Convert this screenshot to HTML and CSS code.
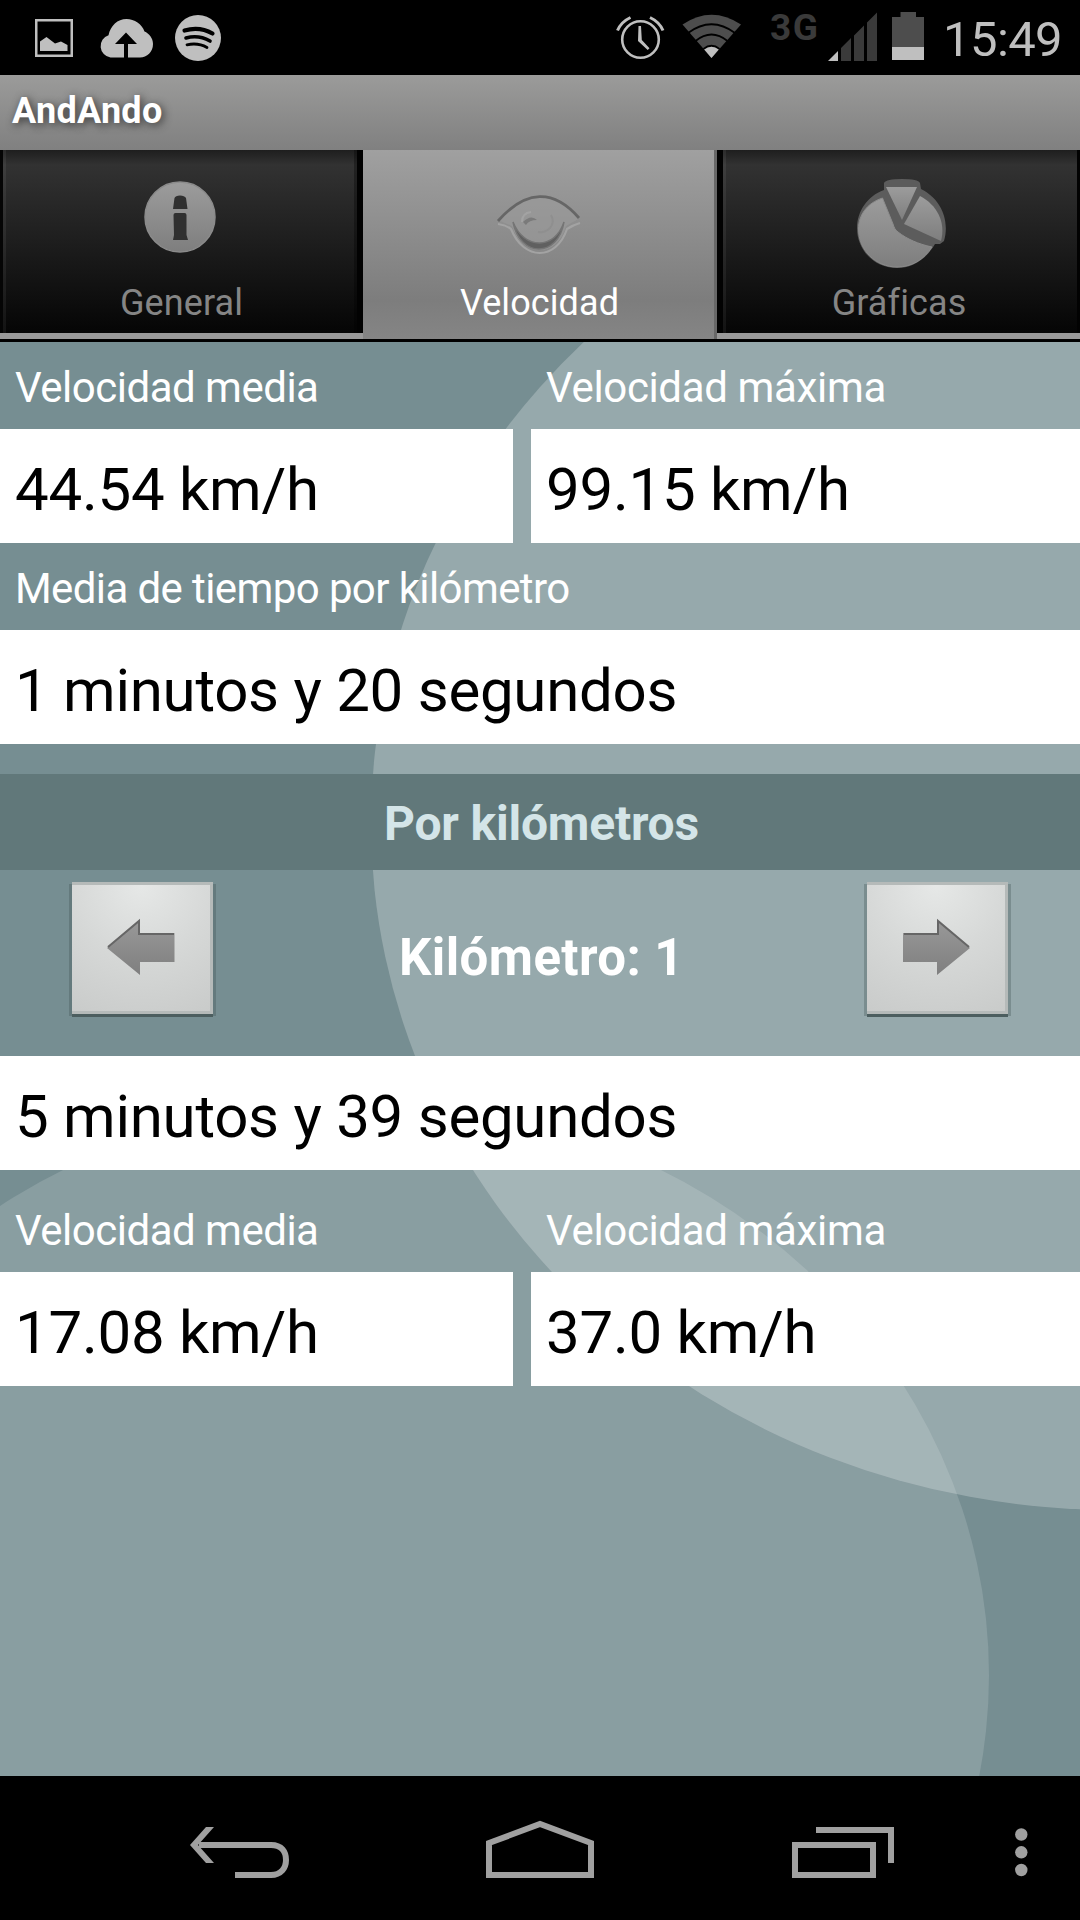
FILE: index.html
```html
<!DOCTYPE html>
<html lang="es">
<head>
<meta charset="utf-8">
<title>AndAndo</title>
<link rel="stylesheet" href="styles.css">
</head>
<body>
<div class="screen">
  <header class="status">
    <svg class="status-left" width="360" height="75" viewBox="0 0 360 75">
      <g fill="#bfbfbf">
        <path fill-rule="evenodd" d="M35 19h38v38H35zM37.500 21.500v33h33v-33z"/>
        <path d="M40 41.500l6.500-4.500 8.500 6.500 6-2 6.500 3.500V51H40z"/>
        <path fill-rule="evenodd" d="M110.500 57.500a11.500 11.500 0 0 1-2-22.300c2-9.500 9-16.200 18-16.200 8 0 15.500 5 18 12.500 4.500 2 8.500 6.500 8.500 12.500 0 8-6 13.500-13 13.500h-12V44h9l-11-11.500L115 44h9v13.500z"/>
        <circle cx="198" cy="38" r="23"/>
      </g>
      <g fill="none" stroke="#000" stroke-linecap="round">
        <path stroke-width="4.200" d="M184.500 30.500q15-4.500 28 3"/>
        <path stroke-width="3.600" d="M186 38q12.500-3.500 24 3"/>
        <path stroke-width="2.800" d="M187 44.800q11-2.500 20 2.700"/>
      </g>
    </svg>
    <div class="status-right">
      <svg width="46" height="75" viewBox="616 0 46 75" fill="none" stroke="#bfbfbf">
        <circle cx="640.500" cy="39.500" r="18.300" stroke-width="2.600"/>
        <path stroke-width="3" d="M617.500 30.500q3.500-8.500 13-13M663 30.500q-3.500-8.500-13-13"/>
        <path fill="#bfbfbf" stroke="none" d="M638.500 26h2.500l.8 14 7.700 8.300-1.800 1.800-9.700-9z"/>
      </svg>
      <svg width="60" height="75" viewBox="682 0 60 75">
        <path fill="#4d4d4d" d="M711.500 58L682.500 24.500Q711.500 5 741 24.500z"/>
        <g fill="none" stroke="#000" stroke-width="1.800">
          <path d="M688 33q23.500-17.500 47 0M695.500 41q16-13 32 0M703.500 49q8-6.500 16 0"/>
        </g>
        <path fill="#bfbfbf" d="M711.500 58l-7.300-8.500q7.300-5.500 14.500 0z"/>
      </svg>
      <span class="network">3G</span>
      <svg width="50" height="75" viewBox="828 0 50 75" fill="#3a3a3a">
        <path fill="#bfbfbf" d="M828 61l10-10v10z"/>
        <path d="M841 61V48l10-10v23zM854 61V35.500l10-10V61zM867 61V22.500l10-10V61z"/>
      </svg>
      <svg class="battery" width="32" height="75" viewBox="892 0 32 75">
        <path fill="#4d4d4d" d="M892 17h8.500v-5H916v5h8v30h-32z"/>
        <path fill="#bfbfbf" d="M892 47h32v13h-32z"/>
      </svg>
      <time class="clock">15:49</time>
    </div>
  </header>

  <div class="titlebar"><h1 class="title">AndAndo</h1></div>

  <nav class="tabs">
    <div class="tab tab-general">
      <svg width="84" height="92" viewBox="0 0 84 92">
        <defs>
          <linearGradient id="gray" x1="0" y1="0" x2="0" y2="1"><stop offset="0" stop-color="#9c9c9c"/><stop offset="1" stop-color="#7e7e7e"/></linearGradient>
        </defs>
        <circle cx="42" cy="45" r="35" fill="url(#gray)" stroke="#8b8b8b" stroke-width="1.500"/>
        <path fill="#303030" d="M36.500 26q1-2.500 5.500-2.500t6 2.500l1.500 11H35zM35.500 43q0-2 2-2h9q2 0 2 2v20l1.500 5H35l1-5z"/>
      </svg>
      <span>General</span>
    </div>
    <div class="tab tab-active">
      <svg width="92" height="92" viewBox="-2 0 92 92" fill="none">
        <path d="M2 48C30 17 58 17 84 46L70 54C62 86 26 86 16 54z" fill="#9b9b9b" opacity=".6"/>
        <path d="M2 52q8 1 13 5C28 89 60 89 71 57q6-4 13-6" stroke="#a3a3a3" stroke-width="2.200"/>
        <path d="M2 49C30 17 58 17 83 46" stroke="#666" stroke-width="2.800"/>
        <path d="M17 50C24 86 62 86 68 50 59 78 28 78 17 50z" fill="#606060" stroke="#757575" stroke-width="1.500"/>
        <path d="M26 50q0-9 9-10" stroke="#a3a3a3" stroke-width="2"/>
        <path d="M27 50q8-8 14-2-8 0-11 5z" fill="#7a7a7a"/>
        <path d="M55 43q4 7-1 13-5 5-12 4" stroke="#8f8f8f" stroke-width="2"/>
      </svg>
      <span>Velocidad</span>
    </div>
    <div class="tab tab-graficas">
      <svg class="pie" width="90" height="92" viewBox="0 0 90 92">
        <g transform="translate(-855 -172)">
          <path d="M884 183q2-4 18-4t18 4l1 6c20 10 29 31 23 52l-4 3h-5c-10 17-24 24-38 24-23 0-40-18-40-40 0-16 10-32 27-38z" fill="#5c5c5c"/>
          <path d="M882.500 198C867 203 858.500 215 858.500 229c0 21 17 38 38.500 38 14 0 27-7 35-20-14-3-25-8-34-15-3-2-4-5-5-8z" fill="url(#gray)" stroke="#8c8c8c" stroke-width="1"/>
          <path d="M886 187h31l-15 33z" fill="url(#gray)"/>
          <path d="M920 196c17 9 26 26 21 45l-37-17z" fill="url(#gray)"/>
        </g>
      </svg>
      <span>Gráficas</span>
    </div>
  </nav>

  <main class="content">
    <svg class="backdrop" width="1080" height="1434" viewBox="0 342 1080 1434">
      <ellipse cx="1115" cy="823" rx="744" ry="687" fill="#fff" fill-opacity=".24"/>
      <ellipse cx="362" cy="1675" rx="627" ry="574.500" fill="#fff" fill-opacity=".14"/>
    </svg>
    <section class="pair">
      <div class="field"><h2 class="label">Velocidad media</h2><p class="value">44.54 km/h</p></div>
      <div class="field"><h2 class="label label-max">Velocidad máxima</h2><p class="value">99.15 km/h</p></div>
    </section>
    <section class="field">
      <h2 class="label label-time">Media de tiempo por kilómetro</h2>
      <p class="value">1 minutos y 20 segundos</p>
    </section>
    <h2 class="band"><span>Por kilómetros</span></h2>
    <div class="pager">
      <button class="arrow" aria-label="Anterior">
        <svg width="68" height="60" viewBox="0 0 68 60">
          <defs><linearGradient id="arrow" x1="0" y1="0" x2="0" y2="1"><stop offset="0" stop-color="#999"/><stop offset="1" stop-color="#7f7f7f"/></linearGradient></defs>
          <path d="M0 30L33 2v13h34.500v29H33v13z" fill="url(#arrow)"/>
          <path d="M1 29L32 3v13h35" fill="none" stroke="#666" stroke-width="2"/>
        </svg>
      </button>
      <span class="current">Kilómetro: 1</span>
      <button class="arrow" aria-label="Siguiente">
        <svg width="68" height="60" viewBox="0 0 68 60">
          <path d="M68 30L35 2v13H1v29h34v13z" fill="url(#arrow)"/>
          <path d="M67 29L36 3v13H2" fill="none" stroke="#666" stroke-width="2"/>
        </svg>
      </button>
    </div>
    <p class="value">5 minutos y 39 segundos</p>
    <section class="pair pair-last">
      <div class="field"><h2 class="label">Velocidad media</h2><p class="value">17.08 km/h</p></div>
      <div class="field"><h2 class="label label-max">Velocidad máxima</h2><p class="value">37.0 km/h</p></div>
    </section>
  </main>

  <footer class="navbar">
    <svg width="1080" height="144" viewBox="0 1776 1080 144" fill="none" stroke="#a0a0a0" stroke-width="6">
      <path d="M199 1845h72c11 0 15 7 15 15s-5 15-15 15h-36"/>
      <path fill="#a0a0a0" stroke="none" d="M190 1845l16-18h8l-16 18 16 18h-8z"/>
      <path d="M489 1843l51-19 51 19v32H489z"/>
      <path d="M795 1845h78v30h-78zM816 1830h75v33"/>
      <g fill="#a0a0a0" stroke="none"><circle cx="1021.300" cy="1834.500" r="6.200"/><circle cx="1021.300" cy="1852.300" r="6.200"/><circle cx="1021.300" cy="1870" r="6.200"/></g>
    </svg>
  </footer>
</div>
</body>
</html>
```
FILE: styles.css
```css
* { box-sizing: border-box; }
body { margin: 0; background: #000; font-family: Roboto, "Liberation Sans", sans-serif; }
h1, h2, p { margin: 0; font-weight: 400; }
svg { display: block; flex: none; overflow: hidden; }

.screen { width: 1080px; height: 1920px; display: flex; flex-direction: column; overflow: hidden; }

.status { height: 75px; display: flex; justify-content: space-between; background: #000; color: #bfbfbf; }
.status-right { display: flex; padding-right: 20px; }
.status-right svg { overflow: visible; }
.status-right svg:nth-of-type(2) { margin-left: 20px; }
.network { width: 58px; margin: 8px 0 0 28px; color: #3a3a3a; font-size: 37px; line-height: 40px; font-weight: 700; letter-spacing: 1.5px; }
.battery { margin-left: 14px; }
.clock { width: 117px; margin-left: 19px; font-size: 49px; line-height: 79px; letter-spacing: -.6px; white-space: nowrap; }

.titlebar { height: 75px; padding-left: 12px; background: linear-gradient(#9b9b9a, #808080); }
.title { color: #fff; font-size: 36px; line-height: 73px; font-weight: 700; letter-spacing: .3px; text-shadow: 2px 2px 9px #333; }

.tabs { height: 192px; display: grid; grid-template-columns: 363px 354px 363px; background: linear-gradient(#999 0 189px, #000 189px); }
.tab { height: 183px; padding-top: 22px; display: flex; flex-direction: column; align-items: center; background: linear-gradient(#1e1e1e, #323232 15px, #050505); color: #858585; font-size: 36px; line-height: 42px; letter-spacing: .1px; }
.tab svg { margin-bottom: 18px; overflow: visible; }
.tab-general { border-left: 3px solid #050505; border-right: 6px solid #020202; box-shadow: inset 3px 0 rgba(255, 255, 255, .06), inset -3px 0 rgba(0, 0, 0, .3); }
.tab-general span { padding-left: 3px; }
.tab-active { height: 189px; padding-left: 3px; background: linear-gradient(#a0a0a0, #7d7d7d 150px, #858585); color: #fff; border-right: 3px solid #686868; }
.tab-active span { margin-left: -1px; }
.tab-graficas { border-left: 6px solid #020202; border-right: 3px solid #020202; box-shadow: inset 3px 0 rgba(255, 255, 255, .06); }
.tab-graficas span { padding-right: 2px; }

.content { position: relative; height: 1434px; background: #768e92; }
.backdrop { position: absolute; inset: 0; }
.pair, .field, .band, .pager, .content > .value { position: relative; }
.pair { display: grid; grid-template-columns: 513px 549px; column-gap: 18px; }
.pair-last { margin-top: 15px; }
.label { height: 87px; padding-left: 15px; color: #fff; font-size: 42px; line-height: 91px; letter-spacing: -.5px; white-space: nowrap; }
.label-max { letter-spacing: -.35px; }
.label-time { letter-spacing: -.6px; }
.value { height: 114px; padding-left: 15px; background: #fff; color: #000; font-size: 60px; line-height: 121px; letter-spacing: -.27px; white-space: nowrap; }
.band { height: 96px; padding-left: 3px; margin-top: 30px; background: #61787a; color: #d4e5e8; font-size: 48px; line-height: 100px; font-weight: 700; letter-spacing: -.2px; text-align: center; }
.pager { height: 186px; padding: 12px 72px 0; display: flex; justify-content: space-between; align-items: flex-start; }
.arrow { width: 141px; height: 132px; padding: 0; display: grid; place-items: center; border: solid #b5bab9; border-width: 3px 3px 3px 0; background: radial-gradient(circle at 50% 0, #e6e8e7, #d6d8d7 50%, #c9cbca); box-shadow: 0 3px 0 #4c5e5f, 3px 2px 0 rgba(60, 75, 75, .3), -3px 2px 0 rgba(60, 75, 75, .3); }
.current { padding-left: 3px; color: #fff; font-size: 51px; line-height: 151px; font-weight: 700; letter-spacing: .4px; }

.navbar { height: 144px; background: #000; }
```
